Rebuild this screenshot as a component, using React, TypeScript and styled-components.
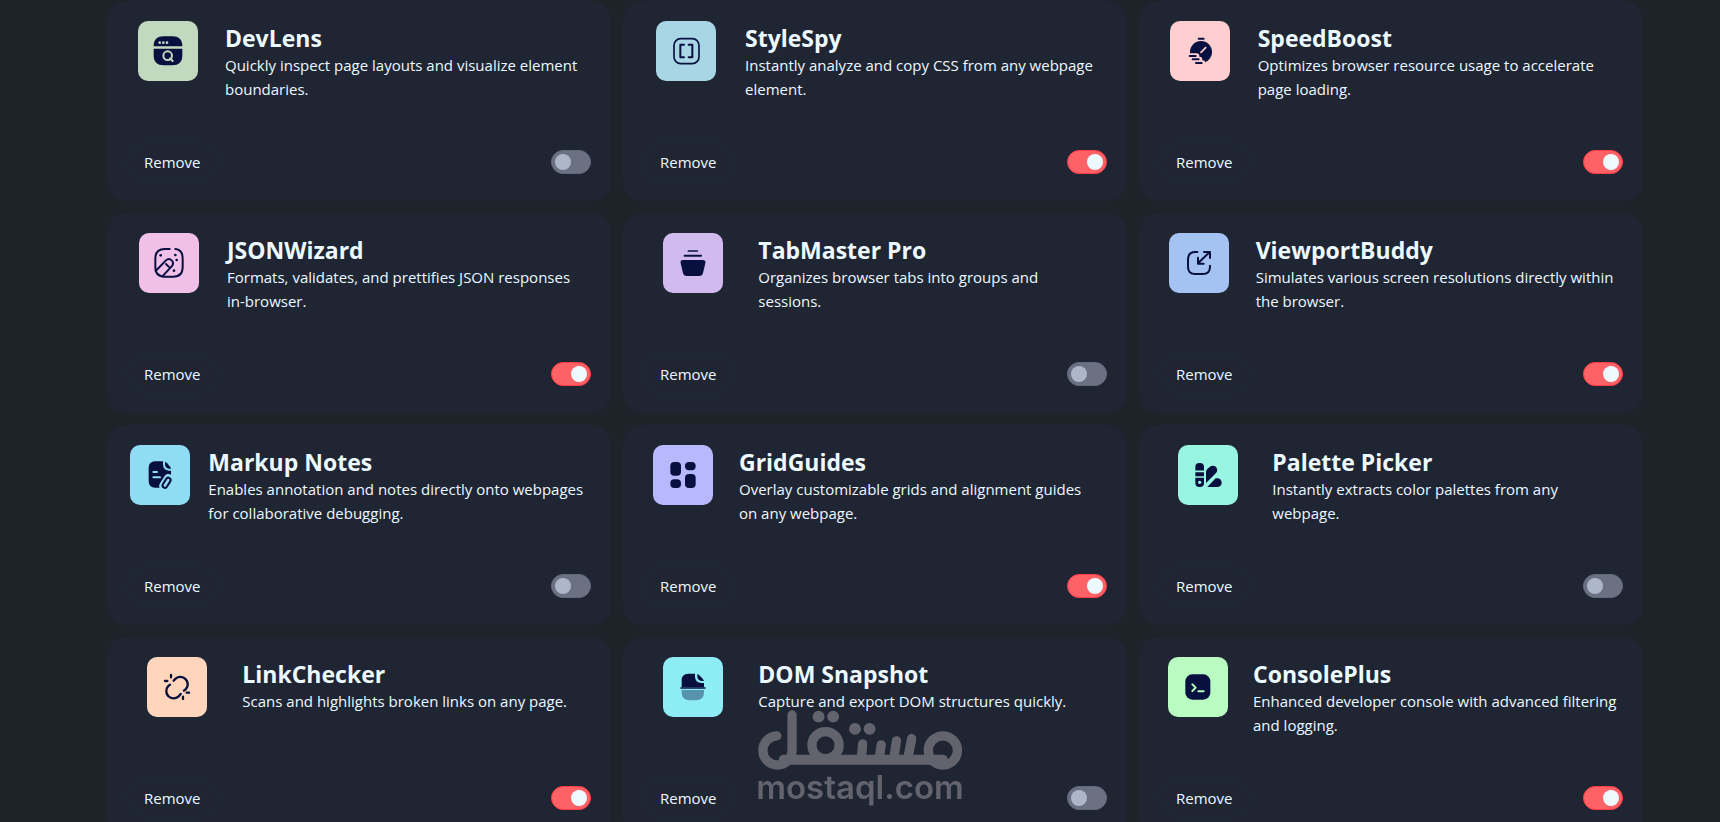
import React, { useState } from "react";
import styled, { createGlobalStyle } from "styled-components";

const INK = "#081040";

const GlobalStyle = createGlobalStyle`
  *, *::before, *::after { box-sizing: border-box; }
  body {
    margin: 0;
    background: #1c2329;
    color: #ecf9ff;
    font-family: "Segoe UI", "Open Sans", "Noto Sans", sans-serif;
    font-size: 15px;
    line-height: 24px;
    overflow: hidden;
  }
`;

const Page = styled.main`
  padding: 1px 77px 0 107px;
  height: 100vh;
  overflow: hidden;
`;

const CardGrid = styled.div`
  display: grid;
  grid-template-columns: repeat(3, minmax(0, 1fr));
  grid-auto-rows: 200px;
  gap: 12px;
`;

const Card = styled.article`
  display: flex;
  flex-direction: column;
  justify-content: space-between;
  padding: 20px 0;
  border-radius: 20px;
  background: #202534;
`;

const CardHeader = styled.header`
  display: flex;
  justify-content: space-evenly;
  padding: 0 4px;
`;

const IconTile = styled.div<{ $color: string }>`
  flex: none;
  width: 60px;
  height: 60px;
  border-radius: 10px;
  background: ${(p) => p.$color};
  color: ${(p) => p.$color};

  svg {
    display: block;
    width: 100%;
    height: 100%;
  }
`;

const Summary = styled.div<{ $width: number }>`
  flex: 0 1 ${(p) => p.$width}px;
`;

const Title = styled.h2`
  margin: 0;
  padding-top: 2px;
  font-size: 23px;
  font-weight: 700;
  line-height: 30px;
`;

const Description = styled.p`
  margin: 0 -6px 0 0;
`;

const CardFooter = styled.footer`
  display: flex;
  align-items: center;
  justify-content: space-between;
  padding: 0 20px;
`;

const RemoveButton = styled.button`
  height: 38px;
  padding: 0 16px;
  border: 1px solid #202937;
  border-radius: 20px;
  background: transparent;
  color: inherit;
  font: inherit;
  cursor: pointer;
`;

const Toggle = styled.input`
  appearance: none;
  display: flex;
  align-items: center;
  width: 40px;
  height: 24px;
  margin: 0;
  padding: 0 3px;
  border: 1px solid #646a7d;
  border-radius: 12px;
  background: #6b7182;
  cursor: pointer;

  &::before {
    content: "";
    width: 16px;
    height: 16px;
    border-radius: 50%;
    background: #aeb6ca;
  }

  &:checked {
    justify-content: flex-end;
    border-color: #ff3b44;
    background: #ff6266;
  }

  &:checked::before {
    background: #ecf9ff;
  }
`;

const Watermark = styled.div`
  position: fixed;
  right: 0;
  bottom: 18px;
  left: 0;
  display: flex;
  flex-direction: column;
  align-items: center;
  color: #62636d;
  font-family: Inter, "Liberation Sans", sans-serif;
  font-size: 33px;
  font-weight: 600;
  line-height: 34px;
  pointer-events: none;

  svg {
    display: block;
    width: 206px;
    height: 60px;
  }
`;

const Icon = ({ children }: { children: React.ReactNode }) => (
  <svg viewBox="0 0 180 180" fill="none" strokeLinecap="round" strokeLinejoin="round" aria-hidden="true">
    {children}
  </svg>
);

const icons = {
  lens: (
    <Icon>
      <path fill={INK} d="M47 76C47 56 57 46 77 46H103C123 46 133 56 133 76Z" />
      <path fill={INK} d="M47 83H133V103C133 123 123 133 103 133H77C57 133 47 123 47 103Z" />
      <g fill="currentColor">
        <circle cx="65" cy="65" r="4" />
        <circle cx="76" cy="65" r="4" />
        <circle cx="87" cy="65" r="4" />
      </g>
      <circle cx="89" cy="104" r="13" stroke="currentColor" strokeWidth="6" />
      <path d="M96 112L104 120" stroke="currentColor" strokeWidth="6" />
    </Icon>
  ),
  brackets: (
    <Icon>
      <g stroke={INK} strokeWidth="5">
        <rect x="54" y="53" width="75" height="75" rx="20" />
        <path d="M84 71H73V109H84M98 71H109V109H98" strokeWidth="6" />
      </g>
    </Icon>
  ),
  timer: (
    <Icon>
      <circle cx="93" cy="93" r="33" fill={INK} />
      <path d="M50 105H80M52 115H89M56 126H98" stroke="currentColor" strokeWidth="16" />
      <path d="M59 105H77M68 115H86M78 126H95M86 53H101" stroke={INK} strokeWidth="6" />
      <path d="M107 80L93 94" stroke="currentColor" strokeWidth="5" />
    </Icon>
  ),
  wand: (
    <Icon>
      <g stroke={INK} strokeWidth="6">
        <path d="M92 48H77C58 48 49 58 49 77V102C49 121 58 131 77 131H103C122 131 131 121 131 102V77C131 59 124 49 109 48" />
        <path d="M50 114L80 83C86 77 93 77 98 82C103 87 103 94 98 100L70 130M81 93L92 104" strokeWidth="6" />
      </g>
      <g fill={INK}>
        <circle cx="65" cy="67" r="4" />
        <circle cx="109" cy="66" r="4" />
        <circle cx="113" cy="81" r="4" />
        <circle cx="105" cy="113" r="4" />
      </g>
    </Icon>
  ),
  stack: (
    <Icon>
      <path d="M76 54H103" stroke={INK} strokeWidth="5" />
      <path d="M65 68H114" stroke={INK} strokeWidth="6" />
      <path fill={INK} d="M60 81H119Q129 81 127 91L120 120Q118 129 109 129H71Q62 129 60 120L53 91Q51 81 60 81Z" />
    </Icon>
  ),
  resize: (
    <Icon>
      <path
        d="M85 57H79Q57 57 57 79V101Q57 123 79 123H101Q123 123 123 101V98M122 57L87 91M105 57H123V75M87 74V92H104"
        stroke={INK}
        strokeWidth="6"
      />
    </Icon>
  ),
  notes: (
    <Icon>
      <path fill={INK} d="M76 49H99V57Q99 76 117 77H123V108Q123 128 103 128H76Q56 128 56 108V69Q56 49 76 49Z" />
      <path fill={INK} d="M105 50Q110 51 121 66Q123 69 123 71H117Q105 70 105 57Z" />
      <path d="M70 81H81M70 97H90" stroke="currentColor" strokeWidth="6" />
      <g transform="rotate(32 110 113)">
        <rect x="94" y="86" width="32" height="54" rx="14" fill="currentColor" />
        <rect x="103" y="97" width="14" height="33" rx="7" stroke={INK} strokeWidth="6" />
      </g>
    </Icon>
  ),
  tiles: (
    <Icon>
      <g fill={INK}>
        <rect x="52" y="51" width="32" height="41" rx="12" />
        <rect x="96" y="51" width="32" height="25" rx="12" />
        <rect x="52" y="103" width="32" height="26" rx="12" />
        <rect x="96" y="87" width="32" height="42" rx="12" />
      </g>
    </Icon>
  ),
  swatches: (
    <Icon>
      <g fill={INK}>
        <rect x="52" y="54" width="26" height="72" rx="12" />
        <path d="M84 81Q84 76 88 72L95 66A13 13 0 0 1 114 84L84 114Z" />
        <path d="M88 126L113 100H118A13 13 0 0 1 118 126Z" />
      </g>
      <path d="M50 79H80M50 96H80" stroke="currentColor" strokeWidth="5" />
      <circle cx="65" cy="112" r="5" fill="currentColor" />
    </Icon>
  ),
  brokenLink: (
    <Icon>
      <g stroke={INK} strokeWidth="7">
        <path d="M80 71L86 65A22 22 0 0 1 117 96L111 101" />
        <path d="M69 83L63 88A22 22 0 0 0 94 119L101 111" />
        <path d="M72 54V61M54 72H61M108 119V126M119 107H126" />
      </g>
    </Icon>
  ),
  snapshot: (
    <Icon>
      <path fill={INK} d="M76 50H96V58Q96 78 116 78H123V91H56V70Q56 50 76 50Z" />
      <path fill={INK} d="M103 51Q107 52 119 65Q123 70 123 72H116Q103 71 103 58Z" />
      <path d="M54 93H126" stroke={INK} strokeWidth="5" />
      <path fill={INK} fillOpacity="0.4" d="M56 99H123V106Q123 130 99 130H80Q56 130 56 106Z" />
    </Icon>
  ),
  terminal: (
    <Icon>
      <rect x="52" y="52" width="75" height="76" rx="21" fill={INK} />
      <path d="M73 82L83 92L73 102M91 103H107" stroke="currentColor" strokeWidth="6" />
    </Icon>
  ),
};

type Extension = {
  name: string;
  description: string;
  icon: keyof typeof icons;
  color: string;
  textWidth: number;
  active: boolean;
};

const extensions: Extension[] = [
  { name: "DevLens", description: "Quickly inspect page layouts and visualize element boundaries.", icon: "lens", color: "#c1d9bf", textWidth: 355, active: false },
  { name: "StyleSpy", description: "Instantly analyze and copy CSS from any webpage element.", icon: "brackets", color: "#a8d6e4", textWidth: 349, active: true },
  { name: "SpeedBoost", description: "Optimizes browser resource usage to accelerate page loading.", icon: "timer", color: "#ffced0", textWidth: 354, active: true },
  { name: "JSONWizard", description: "Formats, validates, and prettifies JSON responses in-browser.", icon: "wand", color: "#f0c0e8", textWidth: 352, active: true },
  { name: "TabMaster Pro", description: "Organizes browser tabs into groups and sessions.", icon: "stack", color: "#d0baee", textWidth: 329, active: false },
  { name: "ViewportBuddy", description: "Simulates various screen resolutions directly within the browser.", icon: "resize", color: "#a4c2f2", textWidth: 357, active: true },
  { name: "Markup Notes", description: "Enables annotation and notes directly onto webpages for collaborative debugging.", icon: "notes", color: "#90dcf4", textWidth: 380, active: false },
  { name: "GridGuides", description: "Overlay customizable grids and alignment guides on any webpage.", icon: "tiles", color: "#b8b8ff", textWidth: 358, active: true },
  { name: "Palette Picker", description: "Instantly extracts color palettes from any webpage.", icon: "swatches", color: "#98f5e1", textWidth: 332, active: false },
  { name: "LinkChecker", description: "Scans and highlights broken links on any page.", icon: "brokenLink", color: "#ffd6bc", textWidth: 329, active: true },
  { name: "DOM Snapshot", description: "Capture and export DOM structures quickly.", icon: "snapshot", color: "#8eecf5", textWidth: 329, active: false },
  { name: "ConsolePlus", description: "Enhanced developer console with advanced filtering and logging.", icon: "terminal", color: "#b9fbc0", textWidth: 361, active: true },
];

const ExtensionCard = ({ item }: { item: Extension }) => {
  const [active, setActive] = useState(item.active);
  return (
    <Card>
      <CardHeader>
        <IconTile $color={item.color}>{icons[item.icon]}</IconTile>
        <Summary $width={item.textWidth}>
          <Title>{item.name}</Title>
          <Description>{item.description}</Description>
        </Summary>
      </CardHeader>
      <CardFooter>
        <RemoveButton type="button">Remove</RemoveButton>
        <Toggle
          type="checkbox"
          role="switch"
          aria-label={`Enable ${item.name}`}
          checked={active}
          onChange={(e) => setActive(e.target.checked)}
        />
      </CardFooter>
    </Card>
  );
};

const MostaqlLogo = () => (
  <svg viewBox="351 213 618 181" fill="none" stroke="currentColor" strokeWidth="28" strokeLinecap="round" role="img" aria-label="مستقل">
    <path d="M409 291A44 44 0 1 0 455 335V228" />
    <path d="M430 363H910" strokeWidth="30" />
    <circle cx="556" cy="319" r="41" />
    <path d="M668 315L664 360M724 318L718 360M770 306L762 360M816 299L804 360" />
    <circle cx="910" cy="335" r="44" />
    <g fill="currentColor" stroke="none">
      <circle cx="535" cy="233" r="18" />
      <circle cx="579" cy="233" r="18" />
      <circle cx="645" cy="270" r="18" />
      <circle cx="689" cy="270" r="18" />
    </g>
  </svg>
);

export default function App() {
  return (
    <>
      <GlobalStyle />
      <Page>
        <CardGrid>
          {extensions.map((item) => (
            <ExtensionCard key={item.name} item={item} />
          ))}
        </CardGrid>
      </Page>
      <Watermark>
        <MostaqlLogo />
        <span>mostaql.com</span>
      </Watermark>
    </>
  );
}
